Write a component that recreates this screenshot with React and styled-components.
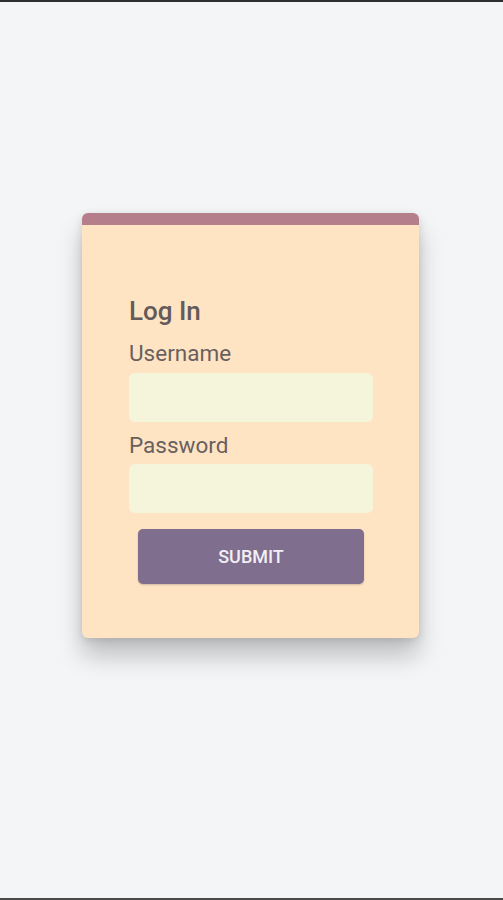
import React from "react";
import styled, { createGlobalStyle } from "styled-components";

const Global = createGlobalStyle`
  html, body { margin: 0; padding: 0; }
  body { background: #f4f5f7; font-family: Roboto, "Liberation Sans", sans-serif; }
  * { box-sizing: border-box; }
`;

const Page = styled.div`
  height: 900px;
  border-top: 2px solid #2e2e2e;
  border-bottom: 2px solid #4a4a4a;
  background: #f4f5f7;
  display: flex;
  justify-content: flex-start;
  padding: 211px 0 0 82px;
`;

const Card = styled.div`
  width: 337px;
  height: 425px;
  background: #ffe4c4;
  border-radius: 6px;
  overflow: hidden;
  box-shadow: 0 18px 24px rgba(0, 0, 0, 0.22), 0 2px 8px rgba(0, 0, 0, 0.12);
  display: flex;
  flex-direction: column;
`;

const TopBar = styled.div`
  height: 12px;
  background: #b47e8a;
  flex: none;
`;

const Form = styled.form`
  display: flex;
  flex-direction: column;
  padding: 71px 46px 0 47px;
`;

const Title = styled.h2`
  margin: 0 0 14px;
  font-size: 26px;
  line-height: 30px;
  font-weight: 500;
  color: #645a5a;
`;

const Label = styled.label`
  display: block;
  font-size: 22.5px;
  line-height: 26px;
  color: #6a5f5f;
  margin-bottom: ${(p) => (p.$tight ? "6px" : "7px")};
`;

const Input = styled.input`
  display: block;
  width: 100%;
  height: 49px;
  border: none;
  outline: none;
  border-radius: 6px;
  background: #f5f5dc;
  margin-bottom: ${(p) => (p.$last ? "16px" : "10px")};
  padding: 0 12px;
  font-size: 18px;
`;

const Button = styled.button`
  margin: 0 9px;
  height: 55px;
  border: none;
  border-radius: 5px;
  background: #7f6e8e;
  color: #f3eef3;
  font-family: Roboto, "Liberation Sans", sans-serif;
  font-size: 18px;
  font-weight: 500;
  text-transform: uppercase;
  box-shadow: 0 1px 2px rgba(0, 0, 0, 0.2);
  cursor: pointer;
`;

export default function App() {
  return (
    <>
      <Global />
      <Page>
        <Card>
          <TopBar />
          <Form onSubmit={(e) => e.preventDefault()}>
            <Title>Log In</Title>
            <Label htmlFor="username">Username</Label>
            <Input id="username" type="text" />
            <Label htmlFor="password" $tight>Password</Label>
            <Input id="password" type="password" $last />
            <Button type="submit">Submit</Button>
          </Form>
        </Card>
      </Page>
    </>
  );
}
